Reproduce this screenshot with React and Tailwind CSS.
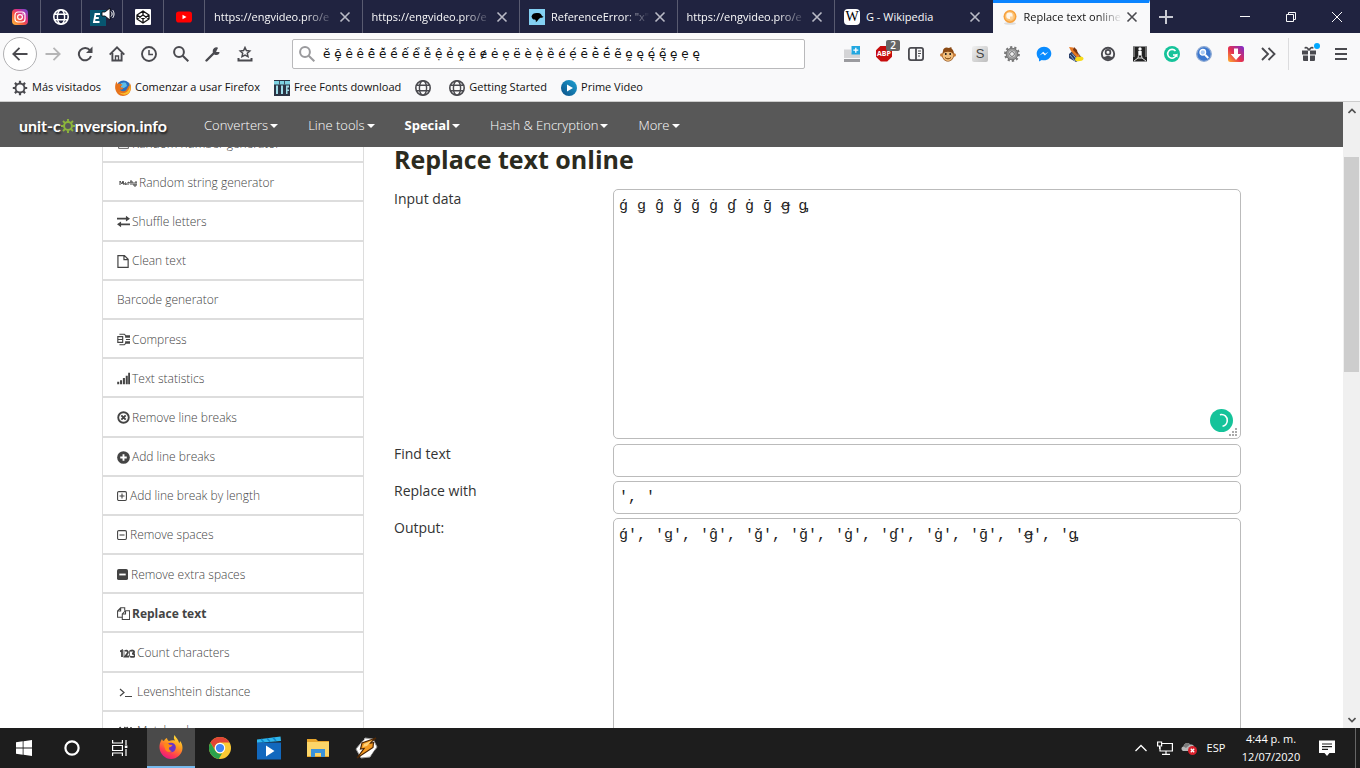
import React from "react";

const glyphTabs = [
  { name: "Instagram", icon: <InstagramIcon /> },
  { name: "Web page", icon: <Globe className="h-4 w-4 text-white" /> },
  { name: "English", icon: <SpeakerTab /> },
  { name: "CodePen", icon: <CodepenIcon /> },
  { name: "YouTube", icon: <YoutubeIcon /> },
];

const tabs = [
  { title: "https://engvideo.pro/e" },
  { title: "https://engvideo.pro/e" },
  { title: 'ReferenceError: "x"', icon: <MdnIcon /> },
  { title: "https://engvideo.pro/e" },
  { title: "G - Wikipedia", icon: <WikiIcon /> },
  { title: "Replace text online", icon: <OrangeBall />, active: true },
];

function Svg({ box = 16, className = "h-4 w-4", children, ...rest }) {
  return (
    <svg viewBox={`0 0 ${box} ${box}`} className={`shrink-0 ${className}`} fill="none" stroke="currentColor" aria-hidden="true" {...rest}>
      {children}
    </svg>
  );
}

/* ---------- favicons ---------- */

function InstagramIcon() {
  return (
    <Svg stroke="none">
      <defs>
        <linearGradient id="ig" x1="0" y1="1" x2="1" y2="0">
          <stop offset="0" stopColor="#fec53c" />
          <stop offset=".4" stopColor="#f4563f" />
          <stop offset=".65" stopColor="#d62e8c" />
          <stop offset="1" stopColor="#5b4fe0" />
        </linearGradient>
      </defs>
      <rect width="16" height="16" rx="4" fill="url(#ig)" />
      <rect x="3" y="3" width="10" height="10" rx="3" stroke="#fff" strokeWidth="1.2" />
      <circle cx="8" cy="8" r="2.4" stroke="#fff" strokeWidth="1.2" />
      <circle cx="11" cy="5" r=".7" fill="#fff" />
    </Svg>
  );
}

function Globe({ className }) {
  return (
    <Svg className={className} strokeWidth="1.4">
      <circle cx="8" cy="8" r="7.2" strokeWidth="1.6" />
      <ellipse cx="8" cy="8" rx="3.6" ry="7.2" />
      <path d="M1.5 5.3h13M1.5 10.7h13" />
    </Svg>
  );
}

function SpeakerTab() {
  return (
    <svg viewBox="0 0 26 22" className="h-[22px] w-[26px] shrink-0" aria-hidden="true">
      <rect x="1" y="4" width="16" height="16" fill="#075670" />
      <path d="M11 8H6.500L5 16h5.500M5.800 12h4" fill="none" stroke="#fff" strokeWidth="1.900" />
      <path d="M13 6h3l5-4v12l-5-4h-3z" fill="#fff" stroke="#000" strokeWidth=".8" />
      <path d="M22 5.500c1.500 1.500 1.500 3.500 0 5M23.500 4c2 2 2 6 0 8" stroke="#fff" fill="none" />
    </svg>
  );
}

function CodepenIcon() {
  return (
    <Svg>
      <rect width="16" height="16" rx="1" fill="#fff" stroke="none" />
      <path d="M8 2l6 4v4l-6 4-6-4V6zM2 6l6 4 6-4M2 10l6-4 6 4M8 2v4M8 10v4" stroke="#111" strokeWidth="1.3" strokeLinejoin="round" />
    </Svg>
  );
}

function YoutubeIcon() {
  return (
    <Svg stroke="none">
      <rect y="2.500" width="16" height="11" rx="2.800" fill="#f00" />
      <path d="M6.500 5.700v4.600l4-2.300z" fill="#fff" />
    </Svg>
  );
}

function MdnIcon() {
  return (
    <Svg stroke="none">
      <rect width="16" height="16" fill="#83d0f2" />
      <path d="M2.500 7.500C3 4.500 6 3.500 9 4c2.500.2 3.600 1.400 4 3l1.500.8c-.8 1-2.200 1-3 .9-1 .6-2 1-2.300 2.300-.6 1-1.600 1.600-2.400 2.300.2-1.300 0-2.300-.8-2.800-1.500.2-2.800-.2-3.500-3z" fill="#000" />
    </Svg>
  );
}

function WikiIcon() {
  return (
    <span className="flex h-4 w-4 shrink-0 items-center justify-center rounded-sm bg-white font-['Liberation_Serif',serif] text-sm leading-none text-black">
      W
    </span>
  );
}

function OrangeBall() {
  return (
    <Svg stroke="none">
      <ellipse cx="8" cy="14.500" rx="6" ry="1.300" fill="#ddd" />
      <circle cx="8" cy="7.500" r="6.500" fill="#f7a03a" />
      <circle cx="8" cy="7.500" r="5" fill="#fcc274" />
      <circle cx="7.500" cy="6.800" r="3.200" fill="#fff6ea" />
      <path d="M8 7.500h3.500a3.500 3.500 0 0 1-3.500 3.500z" fill="#fcd29a" />
    </Svg>
  );
}

function Cross({ className }) {
  return (
    <Svg box={12} className={className} strokeWidth="1.6">
      <path d="M1.500 1.500l9 9M10.500 1.500l-9 9" />
    </Svg>
  );
}

/* ---------- navigation tool icons ---------- */

const NavIcons = {
  Back: (
    <Svg strokeWidth="1.800">
      <path d="M15.500 8H1.500M7.500 1.800L1.300 8l6.200 6.200" />
    </Svg>
  ),
  Forward: (
    <Svg className="h-4 w-4 text-[#b5b5b6]" strokeWidth="1.800">
      <path d="M.5 8h14M8.500 1.800L14.700 8l-6.200 6.200" />
    </Svg>
  ),
  Reload: (
    <Svg strokeWidth="2">
      <path d="M13 4.300A6.200 6.200 0 1 0 14 10" />
      <path d="M15.500.5v6.500H9z" fill="currentColor" stroke="none" />
    </Svg>
  ),
  Home: (
    <Svg strokeWidth="1.900">
      <path d="M.7 8.700L8 1.400l7.300 7.300" />
      <path d="M3.400 7v7.500h9.200V7" />
      <path d="M6.500 15v-5h3v5" strokeWidth="1.400" />
    </Svg>
  ),
  History: (
    <Svg strokeWidth="1.900">
      <circle cx="8" cy="8" r="7" />
      <path d="M8 4v4.500h4" strokeWidth="1.500" />
    </Svg>
  ),
  Search: (
    <Svg strokeWidth="2">
      <circle cx="6" cy="6" r="4.900" />
      <path d="M9.700 9.700l5.600 5.600" />
    </Svg>
  ),
  "Developer tools": (
    <Svg>
      <path d="M1.500 14.500l7-7" strokeWidth="2.400" strokeLinecap="round" />
      <path d="M12.300 2A3.200 3.200 0 0 0 8.300 5.500a3 3 0 0 0 5.700 1.200l-3-.2-.5-1z" fill="currentColor" strokeWidth="1.200" strokeLinejoin="round" />
    </Svg>
  ),
  Bookmarks: (
    <Svg strokeWidth="1.500">
      <path d="M8 1.500l1.400 3.100 3.400.4-2.500 2.300.7 3.300L8 9l-3 1.600.7-3.300L3.200 5l3.400-.4z" />
      <path d="M1.500 12v2.500h13V12" strokeWidth="2" />
    </Svg>
  ),
};

/* ---------- extension icons ---------- */

const Extensions = {
  "New tab group": (
    <Svg stroke="none">
      <path d="M0 3.500h7v3h9V12H0z" fill="#d4d4d6" />
      <path d="M0 13h16v3H0z" fill="#9b9b9f" />
      <rect x="7.500" width="8.500" height="8.500" fill="#22a7e0" />
      <path d="M11.800 1.700v5M9.300 4.200h5" stroke="#fff" strokeWidth="1.300" />
    </Svg>
  ),
  "Adblock Plus": (
    <span className="relative">
      <span className="flex h-4 w-4 items-center justify-center bg-[#c70d0d] text-[7px] font-bold leading-none text-white [clip-path:polygon(30%_0,70%_0,100%_30%,100%_70%,70%_100%,30%_100%,0_70%,0_30%)]">
        ABP
      </span>
      <span className="absolute -top-1.5 left-2.5 flex h-[11px] w-[14px] items-center justify-center rounded-xs bg-[#666] text-[10px] font-semibold leading-none text-white">2</span>
    </span>
  ),
  Sidebar: (
    <Svg strokeWidth="1.800">
      <rect x=".9" y="1.900" width="14.200" height="12.200" rx="2" />
      <path d="M8 2v12" />
      <path d="M10 5h3M10 7.500h3M10 10h2" strokeWidth="1" />
    </Svg>
  ),
  Greasemonkey: (
    <Svg stroke="none">
      <path d="M3 5C3 2 6 .5 9 2c2-1.500 3-.5 2.500.5C13.500 4 14 6 14 9c0 4-3 6.500-6 6.500S2 13 2 9z" fill="#8b4a14" />
      <circle cx="1.800" cy="9" r="1.800" fill="#c77a35" />
      <circle cx="14.200" cy="9" r="1.800" fill="#c77a35" />
      <path d="M3 8c1-3 9-3 10 0 1 4-2 7-5 7s-6-3-5-7z" fill="#f0bd7c" />
      <path d="M5.800 7v2M10.200 7v2" stroke="#222" strokeWidth="1.500" />
      <path d="M5 11.500c2 1.800 4 1.800 6 0" stroke="#713800" />
    </Svg>
  ),
  Stylish: (
    <span className="flex h-4 w-4 items-center justify-center rounded-xs bg-linear-to-br from-[#f1f1f1] to-[#bdbdbd] font-['Liberation_Sans',sans-serif] text-[13px] leading-none text-[#444]">S</span>
  ),
  Settings: (
    <Svg>
      <circle cx="8" cy="8" r="6.700" stroke="#777" strokeWidth="2.400" strokeDasharray="2.200 2" />
      <circle cx="8" cy="8" r="4.700" stroke="#999" strokeWidth="3" />
      <circle cx="8" cy="8" r="5.800" stroke="#666" strokeWidth=".7" />
      <circle cx="8" cy="8" r="2.400" fill="#eee" stroke="#666" />
    </Svg>
  ),
  Messenger: (
    <Svg stroke="none">
      <path d="M8 .7c4.200 0 7.300 3 7.300 6.800S12.200 14.300 8 14.300c-.8 0-1.500-.1-2.200-.3L3 15.500v-2.700C1.500 11.600.7 9.700.7 7.500.7 3.700 3.800.7 8 .7z" fill="#0a8cff" />
      <path d="M3.500 9.500l3.700-3.800 2 2 3.300-2-3.600 3.800-2-2z" fill="#fff" />
    </Svg>
  ),
  "Color tool": (
    <Svg stroke="none">
      <path d="M1 8l6-5 7 9-6 4-7-4z" fill="#293e68" />
      <path d="M2 9l5 6M4 7.500l5 6" stroke="#89a9cf" />
      <path d="M1 1l4 .5L12 10l-3 2-6-7z" fill="#e77a24" />
      <path d="M6 1l3 3 1 5-5-5z" fill="#7d340d" />
      <path d="M7 14c0-2 2-4 4-3 2-1 5 0 4.500 2-.5 2.500-8 3-8.500 1z" fill="#f8dc18" />
    </Svg>
  ),
  Account: (
    <Svg strokeWidth="1.900">
      <circle cx="8" cy="8" r="6.200" />
      <circle cx="8" cy="6.300" r="2.400" strokeWidth="1.700" />
      <path d="M3.500 11.500c2.500-2 6.500-2 9 0-2 3-7 3-9 0z" fill="currentColor" stroke="none" />
    </Svg>
  ),
  Figure: (
    <Svg stroke="none">
      <rect x="1" y=".5" width="14" height="15" fill="#222" />
      <path d="M2 1v10M14 1v10" stroke="#888" strokeWidth="1.500" />
      <circle cx="8" cy="3" r="1.700" fill="#fff" />
      <path d="M6.300 5h3.400v4.500h-3.400z" fill="#fff" />
      <path d="M6.500 9.500L6 12l-4 3M9.500 9.500L10 12l4 3M6 12h4" fill="none" stroke="#ddd" strokeWidth="1" />
    </Svg>
  ),
  Grammarly: (
    <Svg stroke="none">
      <circle cx="8" cy="8" r="8" fill="#15c39a" />
      <path d="M11.500 5a4.400 4.400 0 1 0 .8 4H9" fill="none" stroke="#fff" strokeWidth="1.600" />
      <path d="M13.500 7.500v4l-3-2z" fill="#fff" />
    </Svg>
  ),
  "Search extension": (
    <Svg>
      <circle cx="8" cy="8" r="7.300" fill="#3c78cf" stroke="#8da9d3" strokeWidth="1.300" />
      <circle cx="6.800" cy="6.300" r="2.800" fill="#a9caf3" stroke="#fff" strokeWidth="1.300" />
      <path d="M9 8.700l3.300 3.300" stroke="#fff" strokeWidth="2" />
    </Svg>
  ),
  "Media download": (
    <Svg stroke="none">
      <defs>
        <linearGradient id="dl" x1="0" y1="1" x2="1" y2="0">
          <stop offset="0" stopColor="#ffb32d" />
          <stop offset=".45" stopColor="#e5304f" />
          <stop offset="1" stopColor="#7a2bd0" />
        </linearGradient>
      </defs>
      <rect width="16" height="16" rx="2.500" fill="url(#dl)" />
      <path d="M6 2.500h4V8h3.300L8 14 2.700 8H6z" fill="#fff" />
    </Svg>
  ),
  "More tools": (
    <Svg strokeWidth="1.900">
      <path d="M2 2l6 6-6 6M8.500 2l6 6-6 6" />
    </Svg>
  ),
};

/* ---------- bookmark icons ---------- */

function GearOutline() {
  return (
    <Svg strokeWidth="1.900">
      <circle cx="8" cy="8" r="4.500" />
      <path d="M8 .8v3M8 12.200v3M.8 8h3M12.200 8h3M2.900 2.900L5 5M11 11l2.100 2.100M2.900 13.100L5 11M11 5l2.100-2.100" strokeWidth="2.200" />
    </Svg>
  );
}

function OldFirefox() {
  return (
    <Svg stroke="none">
      <circle cx="8.500" cy="7.500" r="7" fill="#2a6ec0" />
      <path d="M6 3c2 0 3-1 5 0l1 3-3 2H6z" fill="#5dbce8" />
      <path d="M1.500 1.500C.2 4 0 6 .2 8.500 1 13 4 16 8 16c5 0 8-4 8-8.500 0-2-.6-3.700-1.700-5 .5 2 .3 3 0 4C13 4 13 10 9.500 11c-2 .6-4 0-4.500-1.500 1 .3 2 .2 3-.7.8-.6 0-1.300-1-1.200-1 0-1.500-.6-1.500-1.200.3-.8 1.500-.8 2-1.700L5 3.500c-1.300-.3-2 0-2.500.5z" fill="#e7731c" />
      <path d="M14.500 3.500c.5 3 .3 5-1.500 7-2 3-6 3.500-9 1.500 3 4 8 3 10.300.5 1.700-2.500 1.700-6 .2-9z" fill="#fcc02c" />
    </Svg>
  );
}

function TtfIcon() {
  return (
    <Svg stroke="none">
      <rect width="16" height="16" fill="#2b3445" />
      <path d="M0 1h16v3.500H0z" fill="#7ed3e3" />
      <path d="M2 5.500h2V14H2zM7 5.500h2V14H7zM12 5.500h3v2h-1.500v2H15v1.500h-1.500v3H12z" fill="#9edce8" />
      <path d="M5.500 1v3.500M10.500 1v3.500" stroke="#2b3445" strokeWidth=".8" />
    </Svg>
  );
}

function PrimeIcon() {
  return (
    <Svg stroke="none">
      <defs>
        <linearGradient id="pv" x1="0" y1="1" x2="1" y2="0">
          <stop offset="0" stopColor="#0b4f86" />
          <stop offset="1" stopColor="#1ea2d4" />
        </linearGradient>
      </defs>
      <circle cx="8" cy="8" r="8" fill="url(#pv)" />
      <path d="M6 4.500v7L12 8z" fill="#fff" />
    </Svg>
  );
}

const bookmarks = [
  { label: "Más visitados", icon: <GearOutline /> },
  { label: "Comenzar a usar Firefox", icon: <OldFirefox /> },
  { label: "Free Fonts download", icon: <TtfIcon /> },
  { label: "", icon: <Globe className="h-4 w-4" /> },
  { label: "Getting Started", icon: <Globe className="h-4 w-4" /> },
  { label: "Prime Video", icon: <PrimeIcon /> },
];

/* ---------- browser chrome ---------- */

function TabStrip() {
  return (
    <div className="flex h-[33px] shrink-0 bg-[#202340] text-[11px] text-[#f9f9fa]">
      {glyphTabs.map((t) => (
        <button key={t.name} aria-label={t.name} className="flex w-[41px] shrink-0 items-center justify-center border-r border-[#595b70]">
          {t.icon}
        </button>
      ))}
      <div className="flex w-[945px]">
        {tabs.map((t, i) => (
          <div
            key={i}
            className={`flex min-w-0 flex-1 basis-0 items-center gap-1 border-r pl-[9px] pr-[11px] ${
              t.active ? "border-t-3 border-r-transparent border-t-[#0a84ff] bg-[#f9f9fa] pb-[3px] text-[#111]" : i === 4 ? "border-transparent" : "border-[#595b70]"
            }`}
          >
            {t.icon}
            <button
              className={`min-w-0 flex-1 overflow-hidden whitespace-nowrap pt-0.5 text-left ${t.icon ? "pl-0.5" : ""} ${
                i === 4 ? "" : "[mask-image:linear-gradient(to_right,black_75%,transparent)]"
              }`}
            >
              {t.title}
            </button>
            <button aria-label="Close tab" className={t.active ? "text-[#4a4a4f]" : "text-[#b9bac6]"}>
              <Cross className="h-3 w-3" />
            </button>
          </div>
        ))}
      </div>
      <button aria-label="New tab" className="flex w-8 items-center justify-center text-[#c8c9d2]">
        <Svg strokeWidth="2">
          <path d="M8 1v14M1 8h14" />
        </Svg>
      </button>
      <div className="ml-auto flex">
        <button aria-label="Minimize" className="flex w-[46px] items-center justify-center">
          <Svg box={10} className="h-2.5 w-2.5"><path d="M0 4.500h10" /></Svg>
        </button>
        <button aria-label="Restore" className="flex w-[46px] items-center justify-center">
          <Svg box={10} className="h-2.5 w-2.5"><path d="M.5 2.500h7v7h-7zM2.500 2.500v-2h7v7h-2" /></Svg>
        </button>
        <button aria-label="Close" className="flex w-[46px] items-center justify-center">
          <Svg box={10} className="h-2.5 w-2.5"><path d="M0 0l10 10M10 0L0 10" /></Svg>
        </button>
      </div>
    </div>
  );
}

function Toolbar() {
  return (
    <div className="flex h-[41px] shrink-0 items-center bg-[#f9f9fa] px-[3px] text-[#4a4a4f]">
      {Object.entries(NavIcons).map(([name, icon], i) => (
        <button
          key={name}
          aria-label={name}
          className={i === 0 ? "flex h-[34px] w-[34px] shrink-0 items-center justify-center rounded-full border border-[#b1b1b3] bg-white" : "flex h-8 w-8 shrink-0 items-center justify-center"}
        >
          {icon}
        </button>
      ))}
      <div className="mx-[31px] flex h-[30px] min-w-0 flex-1 items-center gap-2 rounded-xs border border-[#b9b9bb] bg-white px-1.5">
        <span className="text-[#9a9a9d]">{NavIcons.Search}</span>
        <input
          aria-label="Search or enter address"
          className="min-w-0 flex-1 bg-transparent font-['DejaVu_Sans','Noto_Sans',sans-serif] text-[12px] text-[#111] outline-none"
          defaultValue="ĕ ḝ ê ê ê̄ ê̌ ề ế ể ễ ệ ẻ ḙ ě ɇ ė ẹ ë è ẹ̀ ȅ é ẹ́ ē ḕ ḗ ẽ ḛ ę ę́ ę̃ ȩ ẹ ę"
        />
      </div>
      {Object.entries(Extensions).map(([name, icon]) => (
        <button key={name} aria-label={name} className="flex h-8 w-8 shrink-0 items-center justify-center">
          {icon}
        </button>
      ))}
      <span className="mx-1 h-8 w-px shrink-0 bg-[#dcdcde]" />
      <button aria-label="What's new" className="relative flex h-8 w-8 shrink-0 items-center justify-center">
        <Svg stroke="none" fill="currentColor">
          <path d="M1 4.500h6v4H1zM9 4.500h6v4H9zM2 9.500h5V15H3a1 1 0 0 1-1-1zM9 9.500h5V14a1 1 0 0 1-1 1H9z" />
          <path d="M8 4.500C7 2 4.500.5 4 2.500M8 4.500C9 2 11.500.5 12 2.500" fill="none" stroke="currentColor" strokeWidth="1.600" />
        </Svg>
        <span className="absolute right-[5px] top-[5px] h-1.5 w-1.5 rounded-full bg-[#00a8ff]" />
      </button>
      <button aria-label="Open menu" className="flex h-8 w-8 shrink-0 items-center justify-center">
        <Svg strokeWidth="2"><path d="M2 3h12M2 8h12M2 13h12" /></Svg>
      </button>
    </div>
  );
}

function Bookmarks() {
  return (
    <nav aria-label="Bookmarks" className="flex h-7 shrink-0 items-center gap-3.5 border-b border-[#ccc] bg-[#f9f9fa] pl-3 text-[11px] text-[#111]">
      {bookmarks.map((b, i) => (
        <a key={i} href="#bookmark" aria-label={b.label || "Web page"} className={`flex items-center gap-1 whitespace-nowrap ${b.label ? "" : "mr-1"}`}>
          <span className="text-[#4a4a4f]">{b.icon}</span>
          {b.label}
        </a>
      ))}
    </nav>
  );
}

/* ---------- page ---------- */

function Gear() {
  return (
    <Svg className="h-3.5 w-3.5 text-[#8cb53c]">
      <circle cx="8" cy="8" r="4.500" strokeWidth="2.300" />
      <path d="M8 0v3M8 13v3M0 8h3M13 8h3M2.300 2.300l2.200 2.200M11.500 11.500l2.200 2.200M2.300 13.700l2.200-2.200M11.500 4.500l2.200-2.200" strokeWidth="2.200" />
    </Svg>
  );
}

function SiteNav() {
  const items = ["Converters", "Line tools", "Special", "Hash & Encryption", "More"];
  return (
    <header className="relative z-10 flex h-[45px] shrink-0 items-center bg-[#585858] pl-[19px] pt-0.5 text-white">
      <a href="#home" className="flex w-[150px] items-center whitespace-nowrap font-['Lato',sans-serif] text-base font-bold leading-5 [text-shadow:1px_2px_2px_#222]">
        unit-c<Gear />nversion.info
      </a>
      <nav className="ml-[35px] flex gap-[30px] text-[13px]">
        {items.map((t) => (
          <button key={t} className={`flex items-center gap-0.5 whitespace-nowrap ${t === "Special" ? "font-bold" : "font-light"}`}>
            {t}
            <Svg box={8} className="h-2 w-2" stroke="none" fill="currentColor"><path d="M0 2h8L4 6z" /></Svg>
          </button>
        ))}
      </nav>
    </header>
  );
}

const S = "h-[13px] w-[13px]";
const side = [
  { t: "Random number generator", icon: <Svg className={S}><path d="M2 2h12v12H2z" /></Svg> },
  { t: "Random string generator", pad: "pl-4", icon: <Svg box={18} className="h-[18px] w-[18px]" strokeWidth="1"><path d="M1 11V7l2 3 1-3 1 4M6 10c2 0 1-2 0-1s0 2 2 1M9 11V8l2 1M12 6v5M11 8h3M14 8v3h2M16 8v5M16 8h2v3h-2" /></Svg> },
  { t: "Shuffle letters", icon: <Svg className={S} strokeWidth="2"><path d="M0 4.500h12M4 11.500h12" /><path d="M11 1l5 3.500L11 8zM5 8v7l-5-3.500z" fill="currentColor" stroke="none" /></Svg> },
  { t: "Clean text", icon: <Svg box={14} className="h-[13px] w-[13px]" strokeWidth="1.300"><path d="M1 .7h7l4 4v8.600H1zM7.500.7V5H12" /></Svg> },
  { t: "Barcode generator" },
  { t: "Compress", icon: <Svg className={S} strokeWidth="1.400"><path d="M3 1.500h6l2 2M3 14.500h6l2-2M1 4.500h6v7H1zM1 8h6M10 3.500h6v1.500h-6M11 8h5M10 11h6v1.500h-6" /></Svg> },
  { t: "Text statistics", icon: <Svg className={S} strokeWidth="2.500"><path d="M1.500 15v-3M5 15v-5M8.500 15V7.500M12 15V4.500M15 15V1" /></Svg> },
  { t: "Remove line breaks", icon: <Svg className={S} strokeWidth="2.300"><circle cx="8" cy="8" r="6.500" /><path d="M5.300 5.300l5.400 5.400M10.700 5.300l-5.400 5.400" /></Svg> },
  { t: "Add line breaks", icon: <Svg className={S} strokeWidth="2.300"><circle cx="8" cy="8" r="7.800" fill="currentColor" stroke="none" /><path d="M8 4v8M4 8h8" stroke="#fff" /></Svg> },
  { t: "Add line break by length", gap: "gap-[3px]", icon: <Svg box={12} className="h-2.5 w-2.5" strokeWidth="1.300"><rect x=".7" y=".7" width="10.600" height="10.600" rx="1.500" /><path d="M6 3v6M3 6h6" /></Svg> },
  { t: "Remove spaces", gap: "gap-[3px]", icon: <Svg box={12} className="h-2.5 w-2.5" strokeWidth="1.300"><rect x=".7" y=".7" width="10.600" height="10.600" rx="1.500" /><path d="M3 6h6" /></Svg> },
  { t: "Remove extra spaces", gap: "gap-[3px]", icon: <Svg box={12} className="h-[11px] w-[11px]" strokeWidth="2"><rect width="12" height="12" rx="2" fill="currentColor" stroke="none" /><path d="M2.500 6h7" stroke="#fff" /></Svg> },
  { t: "Replace text", bold: true, icon: <Svg className={S} strokeWidth="1.300"><path d="M6.500 12.500H.7V5L4.500 1h5v3.500M4.500 1v4H.7" /><path d="M10.500 4.500h5v11h-9V8.500zM10.500 4.500v4h-4" /></Svg> },
  { t: "Count characters", pad: "pl-[17px]", icon: <Svg box={15} className="h-[15px] w-[15px]" strokeWidth="1.800"><path d="M0 5.500l2-1V11M5 5c2-1.500 4 1 2 3L5 10.500h4M10 5c5-2 5 2.500 2 2.500 4 0 4 5-2 3" /><path d="M4 4v7M9.500 4.500v6" strokeWidth=".8" /></Svg> },
  { t: "Levenshtein distance", pad: "pl-4", gap: "gap-1", icon: <Svg box={14} className="h-3.5 w-3.5" strokeWidth="1.200"><path d="M1 4l4 3.500L1 11M6 11.500h7" /></Svg> },
  { t: "Match columns", pad: "pl-4", gap: "gap-1", icon: <Svg box={14} className="h-3.5 w-3.5" strokeWidth="1.500"><path d="M1 12V3l3 6 2-6v9M8 12V3l4 9V3" /></Svg> },
];

function SideMenu() {
  return (
    <aside className="-mt-6 w-[262px] shrink-0">
      <ul className="grid h-[627px] auto-rows-fr text-[12px] text-[#444]">
        {side.map((s) => (
          <li key={s.t} className="border border-[#ddd]">
            <a href="#tool" className={`flex h-full items-center pt-0.5 ${s.pad || "pl-3.5"} ${s.gap || "gap-0.5"} ${s.bold ? "font-bold" : "font-light"}`}>
              {s.icon}
              {s.t}
            </a>
          </li>
        ))}
      </ul>
    </aside>
  );
}

const field = "block w-full rounded-[5px] border border-[#bbb] bg-white px-[5px] font-['Liberation_Mono','DejaVu_Sans_Mono',monospace] text-[15px] leading-5 text-[#222] outline-none";

function Row({ id, label, children }) {
  return (
    <div className="flex">
      <label htmlFor={id} className="w-[219px] shrink-0 text-sm leading-5 text-[#333]">{label}</label>
      <div className="relative min-w-0 flex-1">{children}</div>
    </div>
  );
}

function Page() {
  return (
    <div className="flex min-h-0 flex-1">
      <div className="flex min-w-0 flex-1 flex-col overflow-hidden bg-white">
        <SiteNav />
        <div className="min-h-0 flex-1">
          <div className="mx-auto flex max-w-[1139px] gap-[30px]">
            <SideMenu />
            <main className="min-w-0 flex-1">
              <h1 className="-mt-1 mb-3.5 text-[25px] font-bold leading-8 text-[#2b2b20]">Replace text online</h1>
              <form className="flex flex-col gap-1">
                <Row id="input" label="Input data">
                  <textarea id="input" spellCheck="false" className={`${field} mb-px h-[250px] resize-none pt-[7px]`} defaultValue="ǵ ǥ ĝ ǧ ğ ġ ɠ ġ ḡ ꞡ ᶃ" />
                  <span className="absolute bottom-2 right-2 text-white">
                    <Svg box={22} className="h-[23px] w-[23px]">
                      <circle cx="11" cy="11" r="11" fill="#15c39a" stroke="none" />
                      <path d="M9.500 5.500c4-1 7.500 2 7 6-.3 2.500-2 4.500-4.500 5" strokeWidth="1.500" />
                    </Svg>
                  </span>
                  <span className="absolute bottom-1 right-1 text-[#aaa]">
                    <Svg box={8} className="h-2 w-2" stroke="none" fill="currentColor">
                      <path d="M6 0h2v2H6zM3 3h2v2H3zM6 3h2v2H6zM0 6h2v2H0zM3 6h2v2H3zM6 6h2v2H6z" />
                    </Svg>
                  </span>
                </Row>
                <Row id="find" label="Find text">
                  <input id="find" className={`${field} h-[33px]`} />
                </Row>
                <Row id="replace" label="Replace with">
                  <input id="replace" className={`${field} h-[33px]`} defaultValue="', '" />
                </Row>
                <Row id="output" label="Output:">
                  <textarea id="output" spellCheck="false" className={`${field} h-[250px] resize-none pt-[7px]`} defaultValue="ǵ', 'ǥ', 'ĝ', 'ǧ', 'ğ', 'ġ', 'ɠ', 'ġ', 'ḡ', 'ꞡ', 'ᶃ" />
                </Row>
              </form>
            </main>
          </div>
        </div>
      </div>
      <div className="flex w-[17px] shrink-0 flex-col items-center bg-[#f0f0f0] text-[#505050]">
        <button aria-label="Scroll up" className="flex h-[17px] items-center">
          <Svg box={8} className="h-2 w-2" strokeWidth="1.600"><path d="M.5 6L4 2.500 7.500 6" /></Svg>
        </button>
        <div className="mt-[38px] h-[215px] w-[15px] bg-[#cdcdcd]" />
        <button aria-label="Scroll down" className="mt-auto flex h-[17px] items-center">
          <Svg box={8} className="h-2 w-2" strokeWidth="1.600"><path d="M.5 2L4 5.500 7.500 2" /></Svg>
        </button>
      </div>
    </div>
  );
}

/* ---------- taskbar ---------- */

const apps = {
  Firefox: (
    <Svg box={24} className="h-6 w-6" stroke="none">
      <defs>
        <linearGradient id="ff" x1=".8" y1="0" x2=".3" y2="1">
          <stop offset="0" stopColor="#ffe83d" />
          <stop offset=".4" stopColor="#ff9a1f" />
          <stop offset=".75" stopColor="#ff3d4f" />
          <stop offset="1" stopColor="#e31587" />
        </linearGradient>
      </defs>
      <path d="M15.500 0c-1 2.500-.8 4 .5 5.500C14 5 12 5 10 6 8.500 5.300 8 4 8 3 6.500 3.500 5.500 4.800 5 6 4 6 3.300 5 3 4 1 7 .3 10 .5 13c.5 6 5.500 11 11.500 11s11.500-5 11.500-11c0-3-1-5.500-2.500-7-.1 1-.3 1.700-.8 2.200C19.500 4.500 17 3 15.500 0z" fill="url(#ff)" />
      <circle cx="12" cy="12.500" r="4.800" fill="#6a35c9" />
      <path d="M4.500 9.500c2-1.800 4.500-1.500 6 .3l3 .2c-.5 1.800-2.500 2-3.500 2.500-.3 2 1 3.500 3 3.500-3 2-6.500.5-7-2.500z" fill="#ff8a16" />
    </Svg>
  ),
  Chrome: (
    <Svg box={24} className="h-[22px] w-[22px]" stroke="none">
      <circle cx="12" cy="12" r="12" fill="#fbc934" />
      <path d="M12 0a12 12 0 0 1 10.400 6H12a6 6 0 0 0-5.200 9L1.600 6A12 12 0 0 1 12 0z" fill="#e24436" />
      <path d="M1.600 6l5.200 9a6 6 0 0 0 7.500 2.600L10.700 24A12 12 0 0 1 1.600 6z" fill="#2ba24c" />
      <circle cx="12" cy="12" r="5.700" fill="#fff" />
      <circle cx="12" cy="12" r="4.500" fill="#4285f4" />
    </Svg>
  ),
  "Movies & TV": (
    <Svg box={24} className="h-6 w-6" stroke="none">
      <path d="M0 3.500L23.500.5l.5 4.500L0 7z" fill="#30b7ed" />
      <path d="M4 3l3 3.500M10 2.200l3 3.500M16 1.500l3 3.500" stroke="#0f86cc" strokeWidth="1.600" />
      <rect y="6.500" width="24" height="17" fill="#1268bd" />
      <path d="M9 9.500v11l8.500-5.500z" fill="#fff" />
    </Svg>
  ),
  "File Explorer": (
    <Svg box={24} className="h-6 w-6" stroke="none">
      <path d="M1 3h9l2 2h11v16H1z" fill="#e7a52b" />
      <path d="M1 6h22v14H1z" fill="#fbd568" />
      <path d="M5 13h14v8h-4v-4H9v4H5z" fill="#3b93db" />
    </Svg>
  ),
  Winamp: (
    <Svg box={24} className="h-6 w-6" stroke="none">
      <path d="M10 2l8 1 4 8-7 10-9 1-5-9z" fill="#fff" stroke="#999" />
      <path d="M6 5l3-2M17 20l4-6" stroke="#222" strokeWidth="1.500" />
      <path d="M21 2L7 7l-1.500 6L9 12.500 2 22l16-10.500.5-5-4 1z" fill="#f39a22" stroke="#4b2504" strokeWidth="1.200" />
      <path d="M17 4.500L9 8l-1 3 4-1z" fill="#ffd176" />
    </Svg>
  ),
};

function Taskbar() {
  return (
    <footer className="flex h-10 shrink-0 bg-[#1d1d1d] text-white">
      <button aria-label="Start" className="flex w-12 items-center justify-center">
        <Svg stroke="none" fill="#fff"><path d="M0 2.200l6.700-.9v6.200H0zM7.500 1.200L16 0v7.500H7.500zM0 8.400h6.700v6.300L0 13.700zM7.500 8.400H16V16l-8.500-1.200z" /></Svg>
      </button>
      <button aria-label="Search" className="flex w-12 items-center justify-center">
        <Svg strokeWidth="2.200"><circle cx="8" cy="8" r="6.600" /></Svg>
      </button>
      <button aria-label="Task view" className="mr-[3px] flex w-12 items-center justify-center">
        <Svg strokeWidth="1.200"><path d="M.6 0v3h9.800V0M.6 5.500h9.800v5H.6zM.6 16v-3h9.800v3M14 0v5M14 9v7" /><path d="M12.800 5.500h2.600V8h-2.600z" fill="#fff" stroke="none" /></Svg>
      </button>
      <div className="flex gap-px">
        {Object.entries(apps).map(([name, icon]) => (
          <button key={name} aria-label={name} className={`flex w-12 items-center justify-center ${name === "Firefox" ? "border-b-2 border-[#76b9ed] bg-[#4a4a4a]" : ""}`}>
            {icon}
          </button>
        ))}
      </div>
      <div className="ml-auto flex items-center text-[11px]">
        <button aria-label="Show hidden icons" className="flex w-6 justify-center">
          <Svg box={12} className="h-3 w-3" strokeWidth="1.300"><path d="M.5 9L6 3.500 11.500 9" /></Svg>
        </button>
        <button aria-label="Network" className="flex w-6 justify-center">
          <Svg strokeWidth="1.200"><path d="M5 3.500h10.400v7.500H3V7M9 11v3M5 14.400h8" /><path d="M.6 2h4v4h-4zM2.600 6v3" /></Svg>
        </button>
        <button aria-label="OneDrive" className="flex w-6 justify-center">
          <Svg stroke="none">
            <path d="M3 11C0 11-.5 7 2.500 6.500 3 3 7 2 9 4.500c3-.5 4 1 4 2.500v4z" fill="#b7b7b7" />
            <path d="M2.500 6.500C3 3 7 2 9 4.500L5 8z" fill="#7b7b7b" />
            <circle cx="11.500" cy="10.500" r="4.500" fill="#d9212c" />
            <path d="M9.800 8.800l3.400 3.400M13.200 8.800l-3.400 3.400" stroke="#fff" strokeWidth="1.300" />
          </Svg>
        </button>
        <button className="w-[30px] text-center">ESP</button>
        <button className="w-20 text-center leading-[18px]">
          4:44 p. m.
          <br />
          12/07/2020
        </button>
        <button aria-label="Notifications" className="mx-1 flex w-6 justify-center">
          <Svg stroke="none"><path d="M0 .5h16V13h-5.500L8 16l-2.500-3H0z" fill="#fff" /><path d="M3 4h10M3 6.700h10M3 9.400h6" stroke="#1d1d1d" strokeWidth="1.200" /></Svg>
        </button>
        <span className="ml-3 mr-1 h-10 w-px bg-[#666]" />
      </div>
    </footer>
  );
}

export default function App() {
  return (
    <div className="flex h-screen flex-col overflow-hidden bg-white font-['Open_Sans','Noto_Sans',sans-serif]">
      <TabStrip />
      <Toolbar />
      <Bookmarks />
      <Page />
      <Taskbar />
    </div>
  );
}
